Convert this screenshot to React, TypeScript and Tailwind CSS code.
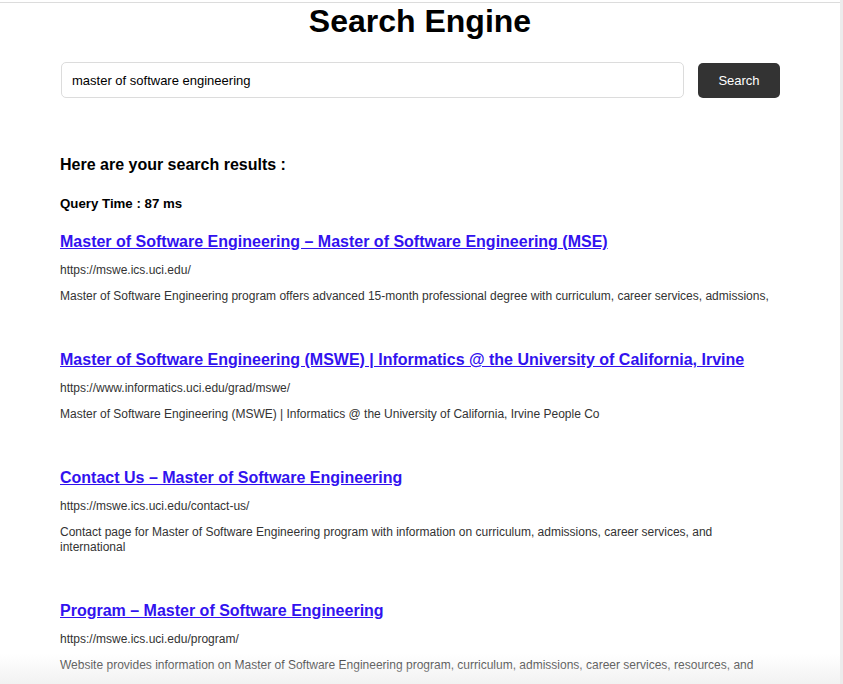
import React from "react";

type Result = {
  title: string;
  url: string;
  snippet: string;
};

const RESULTS: Result[] = [
  {
    title: "Master of Software Engineering – Master of Software Engineering (MSE)",
    url: "https://mswe.ics.uci.edu/",
    snippet:
      "Master of Software Engineering program offers advanced 15-month professional degree with curriculum, career services, admissions,",
  },
  {
    title: "Master of Software Engineering (MSWE) | Informatics @ the University of California, Irvine",
    url: "https://www.informatics.uci.edu/grad/mswe/",
    snippet: "Master of Software Engineering (MSWE) | Informatics @ the University of California, Irvine People Co",
  },
  {
    title: "Contact Us – Master of Software Engineering",
    url: "https://mswe.ics.uci.edu/contact-us/",
    snippet:
      "Contact page for Master of Software Engineering program with information on curriculum, admissions, career services, and international",
  },
  {
    title: "Program – Master of Software Engineering",
    url: "https://mswe.ics.uci.edu/program/",
    snippet:
      "Website provides information on Master of Software Engineering program, curriculum, admissions, career services, resources, and",
  },
];

function ResultItem({ r }: { r: Result }) {
  return (
    <div className="mb-[47px]">
      <a href="#" className="block text-[16px] leading-[18px] font-bold text-[#3212ef] underline">
        {r.title}
      </a>
      <div className="mt-[12px] text-[12px] leading-[14px] text-[#333]">{r.url}</div>
      <p className="mt-[12px] text-[12px] leading-[15px] text-[#333]">{r.snippet}</p>
    </div>
  );
}

export default function App() {
  return (
    <div className="relative flex h-screen overflow-hidden bg-white font-['Liberation_Sans',Arial,sans-serif] text-black">
      <div className="flex-1 pt-[2px]">
        <div className="border-t border-[#dcdcdc] pl-[61px] pr-[60px]">
          {/* Header */}
          <h1 className="-ml-px text-center text-[32px] leading-[37px] font-bold">Search Engine</h1>

          {/* Search bar */}
          <div className="mt-[22px] flex items-center gap-[14px]">
            <input
              readOnly
              defaultValue="master of software engineering"
              className="h-[36px] flex-1 rounded-[5px] border border-[#dcdcdc] bg-white px-[10px] text-[13px] text-black outline-none"
            />
            <button className="h-[35px] w-[82px] rounded-[5px] bg-[#333] pt-px text-[13px] text-white">Search</button>
          </div>

          {/* Results */}
          <div className="-ml-px">
            <h4 className="mt-[58px] text-[16px] leading-[18px] font-bold">Here are your search results :</h4>
            <h5 className="mt-[22px] text-[13.28px] leading-[16px] font-bold">Query Time : 87 ms</h5>

            <div className="mt-[21px]">
              {RESULTS.map((r) => (
                <ResultItem key={r.url} r={r} />
              ))}
            </div>
          </div>
        </div>
      </div>

      {/* right edge strip */}
      <div className="w-[3px] bg-[#ececec]" />

      {/* bottom fade */}
      <div className="pointer-events-none absolute bottom-0 left-0 right-[3px] h-[30px] bg-linear-to-b from-transparent to-[#ececec]/70" />
    </div>
  );
}
